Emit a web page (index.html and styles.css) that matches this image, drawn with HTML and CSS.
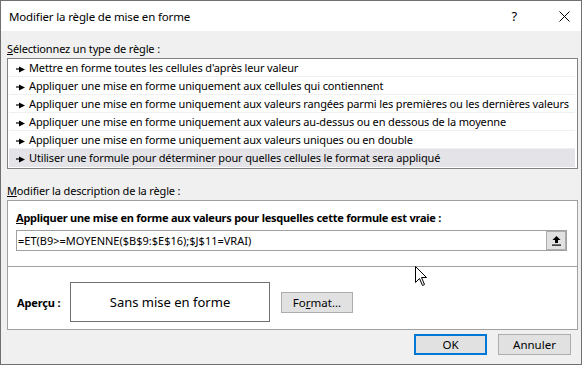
FILE: index.html
```html
<!DOCTYPE html>
<html>
<head>
    <title>Modifier la règle de mise en forme</title>
    <link rel="stylesheet" href="styles.css">
</head>
<body>
    <div class="window">
        <div class="title-bar">
            <span class="title">Modifier la règle de mise en forme</span>
            <span class="help">?</span>
            <svg class="close" width="11" height="11" viewBox="0 0 11 11">
                <path d="M0.5 0.5 L10.5 10.5 M10.5 0.5 L0.5 10.5" stroke="#000" stroke-width="1" fill="none"/>
            </svg>
        </div>

        <div class="content">
            <div class="label"><u>S</u>électionnez un type de règle :</div>
            <div class="rule-list">
                <div class="rule">Mettre en forme toutes les cellules d'après leur valeur</div>
                <div class="rule">Appliquer une mise en forme uniquement aux cellules qui contiennent</div>
                <div class="rule">Appliquer une mise en forme uniquement aux valeurs rangées parmi les premières ou les dernières valeurs</div>
                <div class="rule">Appliquer une mise en forme uniquement aux valeurs au-dessus ou en dessous de la moyenne</div>
                <div class="rule">Appliquer une mise en forme uniquement aux valeurs uniques ou en double</div>
                <div class="rule selected">Utiliser une formule pour déterminer pour quelles cellules le format sera appliqué</div>
            </div>

            <div class="label label-desc"><u>M</u>odifier la description de la règle :</div>
            <div class="panel">
                <div class="panel-top">
                    <div class="bold-label"><u>A</u>ppliquer une mise en forme aux valeurs pour lesquelles cette formule est vraie :</div>
                    <div class="formula">
                        <span class="formula-text">=ET(B9&gt;=MOYENNE($B$9:$E$16);$J$11=VRAI)</span>
                        <span class="collapse-btn">
                            <svg width="9" height="11" viewBox="0 0 9 11">
                                <path d="M4.5 1 L8.5 5 L6 5 L6 8 L3 8 L3 5 L0.5 5 Z" fill="#000"/>
                                <rect x="0" y="9.5" width="9" height="1.2" fill="#000"/>
                            </svg>
                        </span>
                    </div>
                </div>
                <div class="panel-bottom">
                    <span class="preview-label">Aperçu :</span>
                    <div class="preview">Sans mise en forme</div>
                    <button class="btn btn-format">Fo<u>r</u>mat...</button>
                </div>
            </div>

            <div class="actions">
                <button class="btn btn-ok">OK</button>
                <button class="btn">Annuler</button>
            </div>
        </div>

        <svg class="cursor" width="13" height="21" viewBox="0 0 13 21">
            <path d="M0.5 0.5 L0.5 16.5 L4.5 12.5 L7.5 19.5 L9.5 18.5 L6.5 11.5 L11.5 11.5 Z" fill="#fff" stroke="#000" stroke-width="1"/>
        </svg>
    </div>
</body>
</html>
```

FILE: styles.css
```css
body {
    margin: 0;
    font-family: "Noto Sans", "Open Sans", sans-serif;
    font-size: 11px;
    letter-spacing: -0.15px;
    color: #000;
    background-color: #fff;
}
.window {
    position: relative;
    width: 582px;
    height: 365px;
    box-sizing: border-box;
    border: 1px solid #707070;
    background-color: #f0f0f0;
}
.title-bar {
    display: flex;
    align-items: center;
    height: 30px;
    padding-left: 8px;
    background-color: #fff;
}
.title {
    flex: 1;
    font-size: 11.5px;
}
.help {
    font-size: 13px;
    margin-right: 42px;
}
.close {
    margin-right: 11px;
}
.content {
    padding-left: 6px;
}
.label {
    margin-top: 10px;
    margin-bottom: 1px;
    line-height: 16px;
}
.label-desc {
    margin-top: 14px;
    margin-bottom: 1px;
}
.rule-list {
    width: 571px;
    box-sizing: border-box;
    border: 1px solid #828282;
    background-color: #fff;
    padding: 0 2px 1px 1px;
}
.rule {
    height: 18px;
    line-height: 18px;
    box-sizing: border-box;
    border-bottom: 1px solid #f0f0f0;
    padding-left: 7px;
    white-space: nowrap;
    overflow: hidden;
}
.rule::before {
    content: "";
    display: inline-block;
    width: 10px;
    height: 7px;
    margin-right: 3px;
    vertical-align: -1px;
    background: url("data:image/svg+xml,%3Csvg xmlns='http://www.w3.org/2000/svg' width='10' height='7'%3E%3Cpath d='M0 3h4' stroke='%23000' stroke-width='1.2'/%3E%3Cpath d='M3 0.5L9 3.5L3 6.5Z' fill='%23000'/%3E%3C/svg%3E") no-repeat;
}
.rule.selected {
    background-color: #e3e3e8;
    border-bottom: none;
}
.panel {
    width: 571px;
    box-sizing: border-box;
    border: 1px solid #a0a0a0;
    background-color: #fff;
}
.panel-top {
    height: 66px;
    box-sizing: border-box;
    padding: 9px 0 0 8px;
    border-bottom: 1px solid #a0a0a0;
}
.bold-label {
    font-weight: bold;
    letter-spacing: -0.25px;
    line-height: 16px;
}
.formula {
    display: flex;
    align-items: center;
    width: 551px;
    height: 21px;
    margin-top: 4px;
    box-sizing: border-box;
    border: 1px solid #a0a0a0;
    padding-left: 1px;
}
.formula-text {
    flex: 1;
    white-space: nowrap;
    letter-spacing: 0;
}
.collapse-btn {
    display: flex;
    align-items: center;
    justify-content: center;
    width: 20px;
    height: 19px;
    box-sizing: border-box;
    border: 1px solid #adadad;
    background-color: #e1e1e1;
}
.panel-bottom {
    display: flex;
    align-items: center;
    height: 62px;
    box-sizing: border-box;
    padding: 8px 0 0 9px;
}
.preview-label {
    font-weight: bold;
    width: 53px;
}
.preview {
    width: 200px;
    height: 40px;
    box-sizing: border-box;
    border: 1px solid #707070;
    text-align: center;
    line-height: 38px;
    font-size: 13px;
    letter-spacing: 0;
}
.btn {
    height: 21px;
    width: 73px;
    box-sizing: border-box;
    border: 1px solid #adadad;
    background-color: #e1e1e1;
    font-family: "Noto Sans", "Open Sans", sans-serif;
    font-size: 11.5px;
    padding: 0;
    color: #000;
}
.btn-format {
    width: 72px;
    margin-left: 11px;
}
.actions {
    display: flex;
    justify-content: flex-end;
    gap: 11px;
    width: 564px;
    margin-top: 4px;
}
.btn-ok {
    border: 2px solid #0078d7;
}
.cursor {
    position: absolute;
    left: 414px;
    top: 265px;
}
```
